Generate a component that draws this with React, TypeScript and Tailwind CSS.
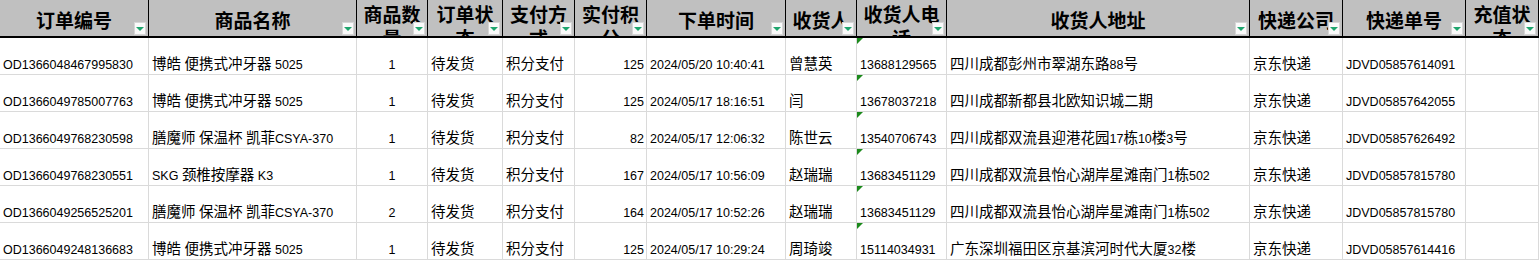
// Excel-style order sheet with filter header
const GRID =
  "grid grid-cols-[149px_208px_71px_75px_72px_72px_139px_71px_90px_303px_93px_123px_73px]";

type Col = { lines: string[]; align: "left" | "center" | "right"; phone?: boolean };

const cols: Col[] = [
  { lines: ["订单编号"], align: "left" },
  { lines: ["商品名称"], align: "left" },
  { lines: ["商品数", "量"], align: "center" },
  { lines: ["订单状", "态"], align: "left" },
  { lines: ["支付方", "式"], align: "left" },
  { lines: ["实付积", "分"], align: "right" },
  { lines: ["下单时间"], align: "left" },
  { lines: ["收货人"], align: "left" },
  { lines: ["收货人电", "话"], align: "left", phone: true },
  { lines: ["收货人地址"], align: "left" },
  { lines: ["快递公司"], align: "left" },
  { lines: ["快递单号"], align: "left" },
  { lines: ["充值状", "态"], align: "left" },
];

const rows: string[][] = [
  ["OD1366048467995830", "博皓 便携式冲牙器 5025", "1", "待发货", "积分支付", "125", "2024/05/20 10:40:41", "曾慧英", "13688129565", "四川成都彭州市翠湖东路88号", "京东快递", "JDVD05857614091", ""],
  ["OD1366049785007763", "博皓 便携式冲牙器 5025", "1", "待发货", "积分支付", "125", "2024/05/17 18:16:51", "闫", "13678037218", "四川成都新都县北欧知识城二期", "京东快递", "JDVD05857642055", ""],
  ["OD1366049768230598", "膳魔师 保温杯 凯菲CSYA-370", "1", "待发货", "积分支付", "82", "2024/05/17 12:06:32", "陈世云", "13540706743", "四川成都双流县迎港花园17栋10楼3号", "京东快递", "JDVD05857626492", ""],
  ["OD1366049768230551", "SKG 颈椎按摩器 K3", "1", "待发货", "积分支付", "167", "2024/05/17 10:56:09", "赵瑞瑞", "13683451129", "四川成都双流县怡心湖岸星滩南门1栋502", "京东快递", "JDVD05857815780", ""],
  ["OD1366049256525201", "膳魔师 保温杯 凯菲CSYA-370", "2", "待发货", "积分支付", "164", "2024/05/17 10:52:26", "赵瑞瑞", "13683451129", "四川成都双流县怡心湖岸星滩南门1栋502", "京东快递", "JDVD05857815780", ""],
  ["OD1366049248136683", "博皓 便携式冲牙器 5025", "1", "待发货", "积分支付", "125", "2024/05/17 10:29:24", "周琦竣", "15114034931", "广东深圳福田区京基滨河时代大厦32楼", "京东快递", "JDVD05857614416", ""],
];

// latin runs in Liberation Sans, CJK runs a bit larger like Excel's fallback font
function Mixed({ text }: { text: string }) {
  const parts = text.split(/([\u3000-\u9fff]+)/);
  return (
    <>
      {parts.map((p, i) =>
        p === "" ? null : /[\u3000-\u9fff]/.test(p) ? (
          <span key={i} className="font-['Noto_Sans_CJK_SC',sans-serif] text-[14.5px]">
            {p}
          </span>
        ) : (
          <span key={i}>{p}</span>
        )
      )}
    </>
  );
}

function FilterButton() {
  return (
    <div className="absolute right-[2px] bottom-[1px] w-[12px] h-[13px] bg-[#fafafa] border border-[#d6d6d6] flex items-center justify-center">
      <div className="w-0 h-0 border-l-[4px] border-r-[4px] border-t-[4px] border-l-transparent border-r-transparent border-t-[#1fa56e]" />
    </div>
  );
}

// header text wraps and gets clipped by the row height, like the sheet does
function HeaderCell({ col }: { col: Col }) {
  const wrapped = col.lines.length > 1;
  return (
    <div
      className={`relative overflow-hidden border-r border-black text-center ${wrapped ? "pt-[2px]" : "pt-[8px]"}`}
    >
      {col.lines.map((l) => (
        <div key={l} className="leading-[24px] whitespace-nowrap">
          {l}
        </div>
      ))}
      <FilterButton />
    </div>
  );
}

function BodyCell({ value, col }: { value: string; col: Col }) {
  const align =
    col.align === "center" ? "justify-center" : col.align === "right" ? "justify-end pr-[2px]" : "justify-start pl-[3px]";
  return (
    <div
      className={`relative flex items-end overflow-hidden whitespace-nowrap border-r border-[#dadada] leading-[17px] ${align}`}
    >
      {col.phone && (
        <div className="absolute left-0 top-0 w-0 h-0 border-t-[6px] border-r-[6px] border-t-[#1c8a1c] border-r-transparent" />
      )}
      <span>
        <Mixed text={value} />
      </span>
    </div>
  );
}

export default function App() {
  return (
    <div className="w-[1539px] h-[260px] overflow-hidden bg-white text-black font-['Liberation_Sans',sans-serif] text-[12.5px]">
      <div
        className={`${GRID} h-[38px] bg-[#c0c0c0] border-b-2 border-black font-['Noto_Sans_CJK_SC',serif] font-bold text-[19px]`}
      >
        {cols.map((c, i) => (
          <HeaderCell key={i} col={c} />
        ))}
      </div>
      {rows.map((r, ri) => (
        <div key={ri} className={`${GRID} h-[37px] border-b border-[#dadada]`}>
          {r.map((v, ci) => (
            <BodyCell key={ci} value={v} col={cols[ci]} />
          ))}
        </div>
      ))}
    </div>
  );
}
